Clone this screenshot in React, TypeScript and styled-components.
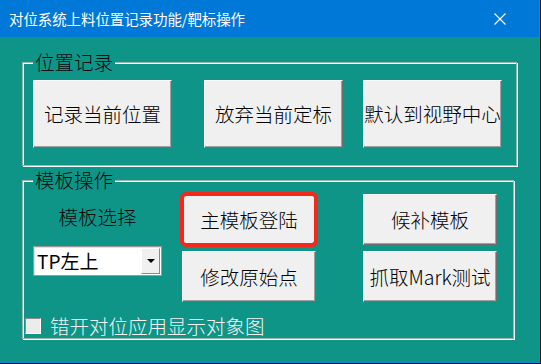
import styled, { createGlobalStyle } from 'styled-components';

const GlobalStyle = createGlobalStyle`
  html, body {
    margin: 0;
    padding: 0;
    background: #14161f;
  }
  body {
    font-family: "Noto Sans CJK SC", "Noto Sans", sans-serif;
  }
`;

// ── Window frame ──────────────────────────────────────────────────────────────

const Window = styled.div`
  width: 539px;
  height: 362px;
  border-right: 1px solid #1883d7;
  border-bottom: 1px solid #1883d7;
  background: #0f9488;
  display: flex;
  flex-direction: column;
`;

const TitleBar = styled.div`
  height: 37px;
  flex-shrink: 0;
  background: #0078d7;
  display: flex;
  align-items: center;
  padding: 0 0 0 9px;
`;

const TitleText = styled.span`
  flex: 1;
  color: #fff;
  font-size: 14.5px;
  line-height: 20px;
  letter-spacing: -0.1px;
`;

const CloseButton = styled.span`
  width: 12px;
  height: 12px;
  margin-right: 33px;
  display: flex;
`;

const Body = styled.div`
  padding: 25px 0 0 22px;
  display: flex;
  flex-direction: column;
  gap: 14px;
`;

// ── Group boxes ───────────────────────────────────────────────────────────────

const GroupBox = styled.section<{ $w: number; $h: number }>`
  position: relative;
  box-sizing: border-box;
  width: ${({ $w }) => $w}px;
  height: ${({ $h }) => $h}px;
  border: 1px solid #9fb5b1;
  box-shadow: inset 1px 1px 0 #fff, 1px 1px 0 #fff;
`;

const GroupLegend = styled.span`
  position: absolute;
  top: -13px;
  left: 10px;
  padding: 0 2px;
  background: #0f9488;
  color: #0a0a0a;
  font-size: 19.5px;
  font-weight: 300;
  line-height: 24px;
`;

const PositionRow = styled.div`
  display: flex;
  padding: 17px 0 0 10px;
`;

// middle column is wider so the right column sits 47px past the middle buttons
const TemplateGrid = styled.div`
  display: grid;
  grid-template-columns: 129px 161px 134px;
  grid-template-rows: 51px 51px;
  column-gap: 20px;
  row-gap: 6px;
  padding: 13px 0 0 10px;
`;

const LeftColumn = styled.div`
  grid-row: 1 / span 2;
  display: flex;
  flex-direction: column;
  align-items: center;
`;

const FieldLabel = styled.span`
  margin-top: 11px;
  color: #0a0a0a;
  font-size: 19.5px;
  font-weight: 300;
  line-height: 24px;
`;

// ── Buttons ───────────────────────────────────────────────────────────────────

const Button = styled.button<{ $w: number; $h: number; $after?: number; $focus?: boolean }>`
  box-sizing: border-box;
  width: ${({ $w }) => $w}px;
  height: ${({ $h }) => $h}px;
  margin: 0 ${({ $after }) => $after ?? 0}px 0 0;
  padding: 0;
  background: #f0f0f0;
  border: 1px solid;
  border-color: #fff #6e6e6e #6e6e6e #fff;
  box-shadow: inset -1px -1px 0 #a0a0a0;
  color: #000;
  font-family: "Noto Sans CJK SC", sans-serif;
  font-size: 19.5px;
  font-weight: 300;
  line-height: 24px;
  white-space: nowrap;
  cursor: pointer;
  ${({ $focus }) =>
    $focus &&
    `
    outline: 4px solid #f5281c;
    outline-offset: -2px;
    border-radius: 4px;
  `}
`;

// ── Combo box ─────────────────────────────────────────────────────────────────

const Combo = styled.div`
  box-sizing: border-box;
  width: 129px;
  height: 30px;
  margin-top: 17px;
  background: #fff;
  border: 1px solid #9a9a9a;
  box-shadow: inset 1px 1px 0 #e0e0e0;
  display: flex;
  align-items: center;
  padding: 0 1px 0 3px;
`;

const ComboValue = styled.span`
  flex: 1;
  color: #000;
  font-size: 19px;
  line-height: 24px;
`;

const ComboArrow = styled.span`
  box-sizing: border-box;
  width: 19px;
  height: 26px;
  background: #f0f0f0;
  border: 1px solid;
  border-color: #fff #8a8a8a #8a8a8a #fff;
  display: flex;
  align-items: center;
  justify-content: center;

  &::after {
    content: '';
    border-left: 4px solid transparent;
    border-right: 4px solid transparent;
    border-top: 4px solid #000;
  }
`;

// ── Check box ─────────────────────────────────────────────────────────────────

const CheckRow = styled.label`
  display: flex;
  align-items: center;
  gap: 9px;
  padding: 12px 0 0 2px;
`;

const CheckBox = styled.span`
  box-sizing: border-box;
  width: 16px;
  height: 16px;
  background: #ececec;
  border: 1px solid;
  border-color: #8c8c8c #fff #fff #8c8c8c;
`;

const CheckText = styled.span`
  color: #f4f4f4;
  font-size: 19.5px;
  font-weight: 300;
  line-height: 24px;
`;

export default function App() {
  return (
    <>
      <GlobalStyle />
      <Window>
        <TitleBar>
          <TitleText>对位系统上料位置记录功能/靶标操作</TitleText>
          <CloseButton>
            <svg width="12" height="12" viewBox="0 0 12 12">
              <path d="M0.5 0.5 L11.5 11.5 M11.5 0.5 L0.5 11.5" stroke="#fff" strokeWidth="1.1" />
            </svg>
          </CloseButton>
        </TitleBar>
        <Body>
          <GroupBox $w={495} $h={104}>
            <GroupLegend>位置记录</GroupLegend>
            <PositionRow>
              <Button $w={139} $h={68} $after={32}>记录当前位置</Button>
              <Button $w={139} $h={68} $after={20}>放弃当前定标</Button>
              <Button $w={139} $h={68}>默认到视野中心</Button>
            </PositionRow>
          </GroupBox>
          <GroupBox $w={492} $h={159}>
            <GroupLegend>模板操作</GroupLegend>
            <TemplateGrid>
              <LeftColumn>
                <FieldLabel>模板选择</FieldLabel>
                <Combo>
                  <ComboValue>TP左上</ComboValue>
                  <ComboArrow />
                </Combo>
              </LeftColumn>
              <Button $w={134} $h={51} $focus>主模板登陆</Button>
              <Button $w={134} $h={51}>候补模板</Button>
              <Button $w={134} $h={51}>修改原始点</Button>
              <Button $w={134} $h={51}>抓取Mark测试</Button>
            </TemplateGrid>
            <CheckRow>
              <CheckBox />
              <CheckText>错开对位应用显示对象图</CheckText>
            </CheckRow>
          </GroupBox>
        </Body>
      </Window>
    </>
  );
}
